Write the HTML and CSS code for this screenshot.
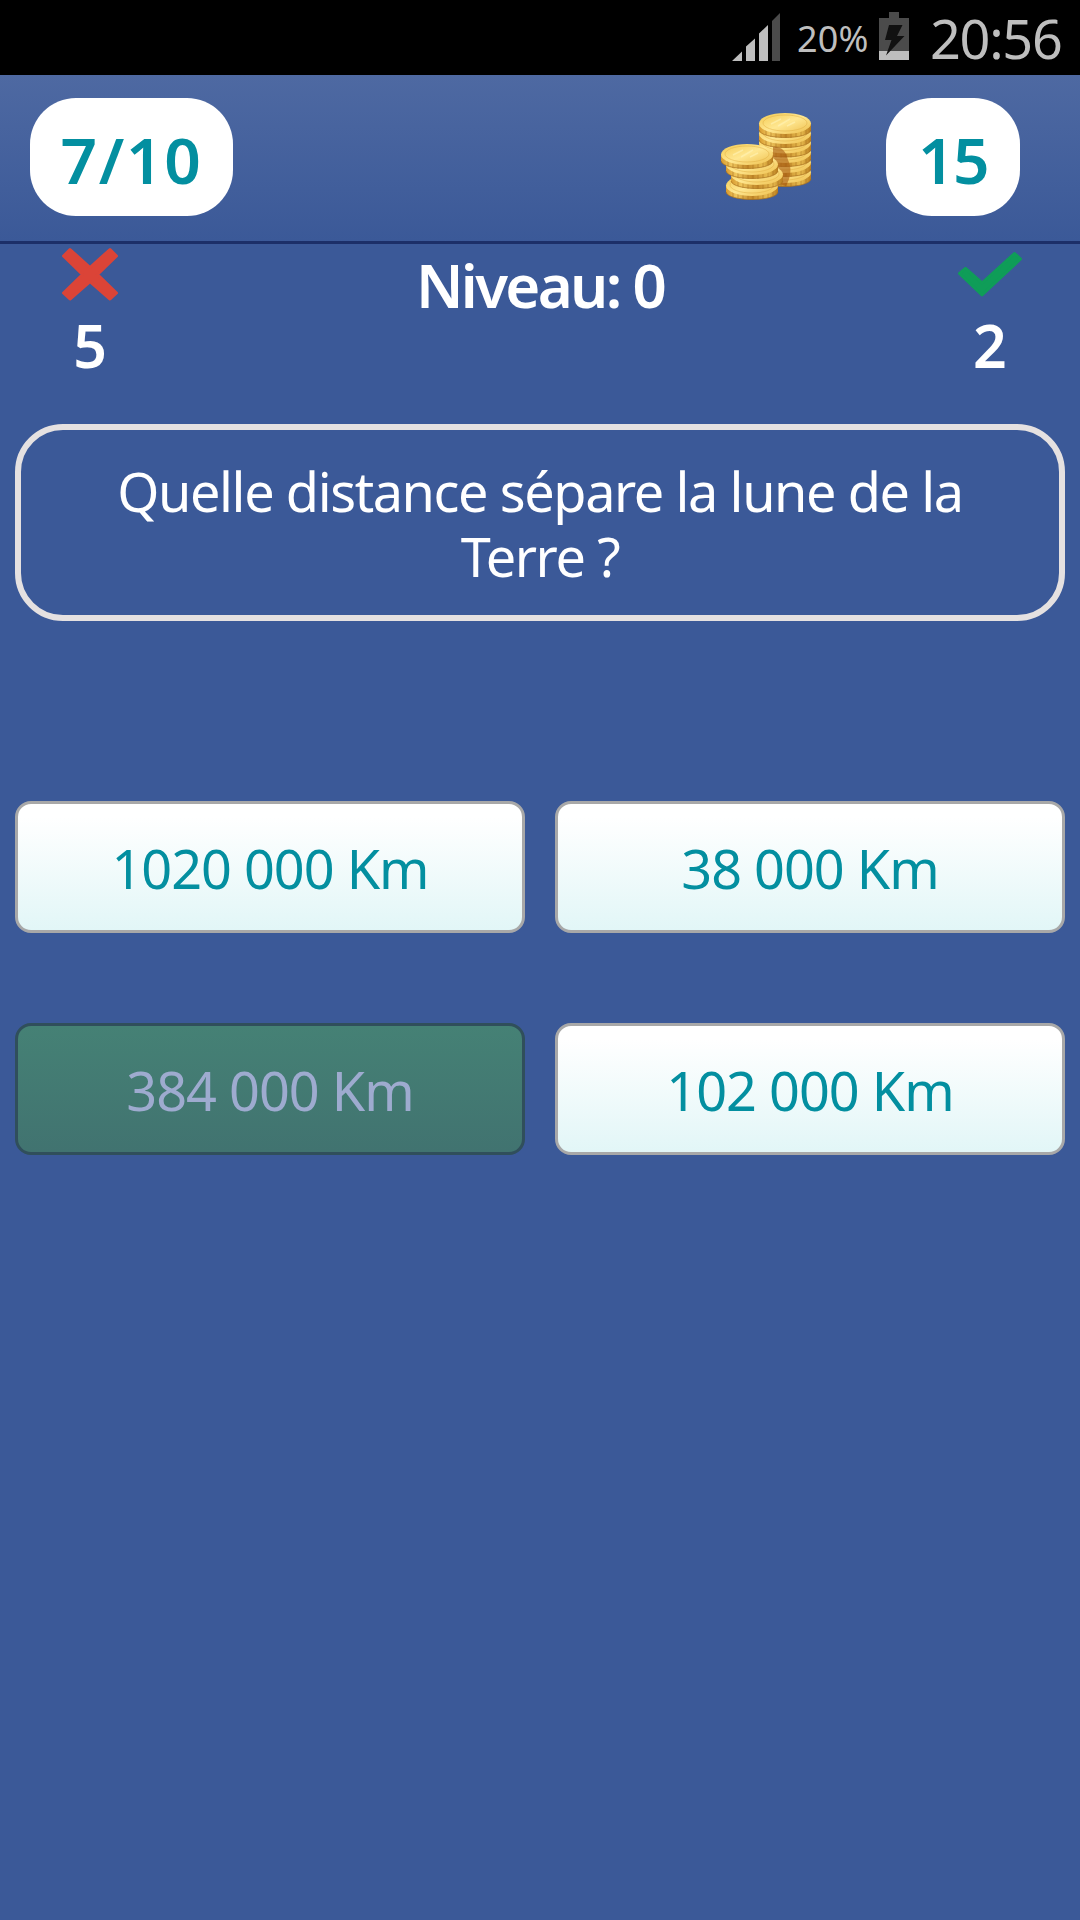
FILE: index.html
```html
<!DOCTYPE html>
<html lang="fr">
<head>
    <meta charset="UTF-8">
    <meta name="viewport" content="width=device-width, initial-scale=1.0">
    <title>Quiz</title>
    <link rel="stylesheet" href="styles.css">
</head>
<body>
    <div class="status-bar">
        <svg class="signal" width="48" height="49" viewBox="0 0 48 49">
            <path fill="#bebebe" d="M0 48L10 38.500V48zM14 48V33.500L23 25.500V48zM27 48V20.500L36 12V48z"/>
            <path fill="#4b4b4b" d="M40 48V8L48 0V48z"/>
        </svg>
        <span class="battery-level">20%</span>
        <svg class="battery" width="30" height="48" viewBox="0 0 30 48">
            <path fill="#4b4b4b" d="M0 6H10V0H20V6H30V39H0z"/>
            <path fill="#bebebe" d="M0 39H30V48H0z"/>
            <path fill="#111" d="M10 13H23.500L18 24H25.500L7 43.500L12.500 28H6z"/>
        </svg>
        <span class="clock">20:56</span>
    </div>

    <div class="header">
        <div class="pill question-number">7/10</div>
        <svg class="coins" width="92" height="92" viewBox="0 0 92 92">
            <defs>
                <linearGradient id="edge">
                    <stop offset="0" stop-color="#d79a30"/>
                    <stop offset="0.2" stop-color="#f0c75e"/>
                    <stop offset="0.5" stop-color="#c48a2a"/>
                    <stop offset="0.8" stop-color="#e9bd50"/>
                    <stop offset="1" stop-color="#b67a1d"/>
                </linearGradient>
                <linearGradient id="face" x1="0" y1="0" x2="1" y2="1">
                    <stop offset="0" stop-color="#f3c950"/>
                    <stop offset="0.5" stop-color="#ffe791"/>
                    <stop offset="1" stop-color="#edbd4a"/>
                </linearGradient>
                <g id="coin">
                    <path fill="url(#edge)" d="M0 11V18C2 28 50 28 52 18V11z"/>
                    <path fill="none" stroke="#9c6317" stroke-opacity="0.3" stroke-width="1.500" d="M7 18v5M12 19v6M17 20v6M22 20v6M27 20v6M32 20v6M37 20v5M42 19v5M47 17v5"/>
                    <path fill="none" stroke="#a66d1c" stroke-opacity="0.700" d="M0 18C2 28 50 28 52 18"/>
                    <ellipse cx="26" cy="11.500" rx="26" ry="10.500" fill="url(#face)"/>
                    <ellipse cx="26" cy="11" rx="22" ry="8" fill="none" stroke="#e0ad42" stroke-opacity="0.500"/>
                </g>
            </defs>
            <use href="#coin" x="38" y="49"/>
            <use href="#coin" x="38" y="39"/>
            <use href="#coin" x="38" y="29"/>
            <use href="#coin" x="38" y="19.500"/>
            <use href="#coin" x="38" y="10"/>
            <use href="#coin" x="38" y="0"/>
            <path fill="#a65a13" fill-opacity="0.600" d="M52 35C60 34 65 39 67 48C71 55 70 65 65 74L52 70z"/>
            <use href="#coin" x="5" y="62"/>
            <use href="#coin" x="10" y="51"/>
            <use href="#coin" x="5" y="41"/>
            <use href="#coin" x="0" y="31"/>
            <path fill="none" stroke="#fff3b8" stroke-opacity="0.600" stroke-width="1.500" d="M50 12l10-5M57 14l12-7M66 14l8-4M12 43l10-5M20 45l12-7M29 45l8-4"/>
        </svg>
        <div class="pill coin-count">15</div>
    </div>

    <div class="scores">
        <div class="score">
            <svg class="score-icon" width="66" height="66" viewBox="0 0 66 66">
                <path fill="#db4437" stroke="#db4437" stroke-width="3" stroke-linejoin="round" d="M13 5.500L33 23.500L53 5.500L59.500 12L40.500 30.500L59.500 49L53 55L33 37.500L13 55L6.500 49L25.500 30.500L6.500 12z"/>
            </svg>
            <span>5</span>
        </div>
        <div class="level">Niveau: 0</div>
        <div class="score">
            <svg class="score-icon" width="66" height="66" viewBox="0 0 66 66">
                <path fill="#0f9d58" stroke="#0f9d58" stroke-width="3" stroke-linejoin="round" d="M2.500 29.500L8.500 24.500L25 39L57.500 9.500L63.500 15L25 51z"/>
            </svg>
            <span>2</span>
        </div>
    </div>

    <div class="question">Quelle distance sépare la lune de la<br>Terre ?</div>

    <div class="answers">
        <button class="answer">1020 000 Km</button>
        <button class="answer">38 000 Km</button>
        <button class="answer correct">384 000 Km</button>
        <button class="answer">102 000 Km</button>
    </div>
</body>
</html>
```
FILE: styles.css
```css
* {
    box-sizing: border-box;
}
body {
    margin: 0;
    min-height: 100vh;
    background-color: #3b5998;
    font-family: "Noto Sans", sans-serif;
    color: #fff;
}

/* Barre d'état */
.status-bar {
    display: flex;
    height: 75px;
    padding-right: 18px;
    justify-content: flex-end;
    align-items: flex-start;
    background-color: #000;
    color: #bebebe;
    white-space: nowrap;
}
.signal {
    margin-top: 13px;
}
.battery-level {
    width: 70px;
    margin: 0 12px 0 17px;
    font-size: 36px;
    line-height: 77px;
    letter-spacing: 0.2px;
}
.battery {
    margin-top: 12px;
}
.clock {
    width: 132px;
    margin-left: 21px;
    font-size: 54px;
    line-height: 77px;
    letter-spacing: -1.3px;
}

/* En-tête */
.header {
    display: flex;
    height: 169px;
    padding: 23px 60px 0 30px;
    align-items: flex-start;
    background: linear-gradient(#4e69a2, #3b5998);
    border-bottom: 3px solid #1c2f68;
}
.pill {
    width: 134px;
    height: 118px;
    padding-top: 3px;
    background-color: #fff;
    border-radius: 46px;
    color: #038fa0;
    font-size: 64px;
    font-weight: 600;
    line-height: 118px;
    text-align: center;
}
.question-number {
    width: 203px;
    margin-right: auto;
    letter-spacing: 1.6px;
}
.coin-count {
    letter-spacing: -1.5px;
}
.coins {
    margin: 14px 73px 0 0;
}

/* Scores */
.scores {
    display: flex;
    height: 180px;
    justify-content: space-between;
}
.score {
    display: flex;
    width: 180px;
    flex-direction: column;
    align-items: center;
    font-size: 59px;
    font-weight: 600;
    line-height: 70px;
}
.level {
    margin-top: 9px;
    font-size: 60px;
    font-weight: 600;
    line-height: 64px;
    letter-spacing: -2.7px;
}

.question {
    height: 197px;
    margin: 0 15px;
    padding-top: 29px;
    border: 6px solid #e5e1e1;
    border-radius: 48px;
    font-size: 54px;
    line-height: 65px;
    letter-spacing: -1.4px;
    text-align: center;
}

/* Réponses */
.answers {
    display: grid;
    grid-template-columns: 1fr 1fr;
    gap: 90px 30px;
    margin: 180px 15px 0;
}
.answer {
    height: 132px;
    padding: 2px 0 0;
    border: 3px solid #a8a8a8;
    border-radius: 16px;
    background: linear-gradient(#fff 10%, #e2f6f7);
    color: #038fa0;
    font-family: inherit;
    font-size: 54px;
    letter-spacing: -1px;
}
.correct {
    border-color: #304f5b;
    background: linear-gradient(#458175, #417370);
    color: #9eabcf;
}
```
